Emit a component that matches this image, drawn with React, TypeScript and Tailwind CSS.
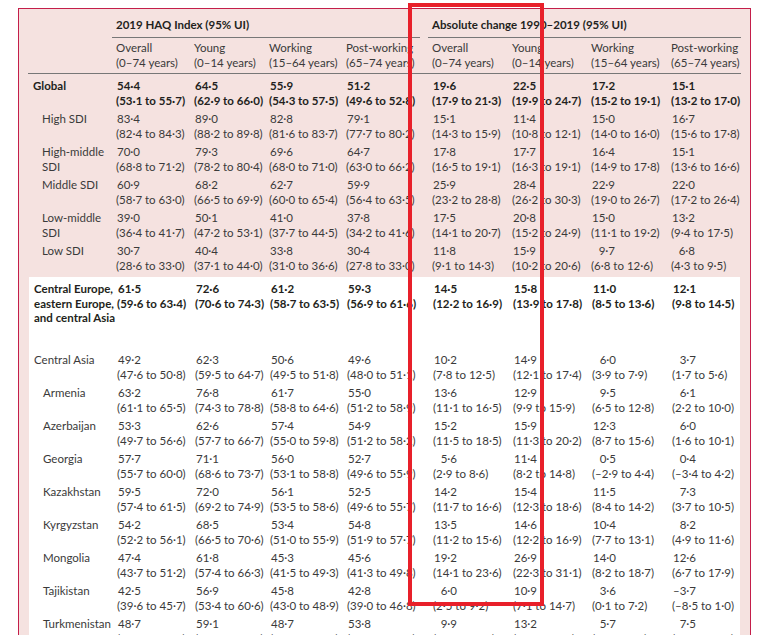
const cols = "grid grid-cols-[84px_78px_75px_77px_78px_8px_80px_79px_80px_74px]";

type Row = { label: string[]; v: string[][]; bold?: boolean; indent?: boolean; h?: string };

const F = "\u2007";

const pink: Row[] = [
  { label: ["Global"], bold: true, v: [["54·4", "(53·1 to 55·7)"], ["64·5", "(62·9 to 66·0)"], ["55·9", "(54·3 to 57·5)"], ["51·2", "(49·6 to 52·8)"], ["19·6", "(17·9 to 21·3)"], ["22·5", "(19·9 to 24·7)"], ["17·2", "(15·2 to 19·1)"], ["15·1", "(13·2 to 17·0)"]] },
  { label: ["High SDI"], indent: true, v: [["83·4", "(82·4 to 84·3)"], ["89·0", "(88·2 to 89·8)"], ["82·8", "(81·6 to 83·7)"], ["79·1", "(77·7 to 80·2)"], ["15·1", "(14·3 to 15·9)"], ["11·4", "(10·8 to 12·1)"], ["15·0", "(14·0 to 16·0)"], ["16·7", "(15·6 to 17·8)"]] },
  { label: ["High-middle", "SDI"], indent: true, v: [["70·0", "(68·8 to 71·2)"], ["79·3", "(78·2 to 80·4)"], ["69·6", "(68·0 to 71·0)"], ["64·7", "(63·0 to 66·2)"], ["17·8", "(16·5 to 19·1)"], ["17·7", "(16·3 to 19·1)"], ["16·4", "(14·9 to 17·8)"], ["15·1", "(13·6 to 16·6)"]] },
  { label: ["Middle SDI"], indent: true, v: [["60·9", "(58·7 to 63·0)"], ["68·2", "(66·5 to 69·9)"], ["62·7", "(60·0 to 65·4)"], ["59·9", "(56·4 to 63·5)"], ["25·9", "(23·2 to 28·8)"], ["28·4", "(26·2 to 30·3)"], ["22·9", "(19·0 to 26·7)"], ["22·0", "(17·2 to 26·4)"]] },
  { label: ["Low-middle", "SDI"], indent: true, v: [["39·0", "(36·4 to 41·7)"], ["50·1", "(47·2 to 53·1)"], ["41·0", "(37·7 to 44·5)"], ["37·8", "(34·2 to 41·6)"], ["17·5", "(14·1 to 20·7)"], ["20·8", "(15·2 to 24·9)"], ["15·0", "(11·1 to 19·2)"], ["13·2", "(9·4 to 17·5)"]] },
  { label: ["Low SDI"], indent: true, v: [["30·7", "(28·6 to 33·0)"], ["40·4", "(37·1 to 44·0)"], ["33·8", "(31·0 to 36·6)"], ["30·4", "(27·8 to 33·0)"], ["11·8", "(9·1 to 14·3)"], ["15·9", "(10·2 to 20·6)"], [F + "9·7", "(6·8 to 12·6)"], [F + "6·8", "(4·3 to 9·5)"]] },
];

const white: Row[] = [
  { label: ["Central Europe,", "eastern Europe,", "and central Asia"], bold: true, h: "h-[71px]", v: [["61·5", "(59·6 to 63·4)"], ["72·6", "(70·6 to 74·3)"], ["61·2", "(58·7 to 63·5)"], ["59·3", "(56·9 to 61·6)"], ["14·5", "(12·2 to 16·9)"], ["15·8", "(13·9 to 17·8)"], ["11·0", "(8·5 to 13·6)"], ["12·1", "(9·8 to 14·5)"]] },
  { label: ["Central Asia"], v: [["49·2", "(47·6 to 50·8)"], ["62·3", "(59·5 to 64·7)"], ["50·6", "(49·5 to 51·8)"], ["49·6", "(48·0 to 51·1)"], ["10·2", "(7·8 to 12·5)"], ["14·9", "(12·1 to 17·4)"], [F + "6·0", "(3·9 to 7·9)"], [F + "3·7", "(1·7 to 5·6)"]] },
  { label: ["Armenia"], indent: true, v: [["63·2", "(61·1 to 65·5)"], ["76·8", "(74·3 to 78·8)"], ["61·7", "(58·8 to 64·6)"], ["55·0", "(51·2 to 58·9)"], ["13·6", "(11·1 to 16·5)"], ["12·9", "(9·9 to 15·9)"], [F + "9·5", "(6·5 to 12·8)"], [F + "6·1", "(2·2 to 10·0)"]] },
  { label: ["Azerbaijan"], indent: true, v: [["53·3", "(49·7 to 56·6)"], ["62·6", "(57·7 to 66·7)"], ["57·4", "(55·0 to 59·8)"], ["54·9", "(51·2 to 58·2)"], ["15·2", "(11·5 to 18·5)"], ["15·9", "(11·3 to 20·2)"], ["12·3", "(8·7 to 15·6)"], [F + "6·0", "(1·6 to 10·1)"]] },
  { label: ["Georgia"], indent: true, v: [["57·7", "(55·7 to 60·0)"], ["71·1", "(68·6 to 73·7)"], ["56·0", "(53·1 to 58·8)"], ["52·7", "(49·6 to 55·9)"], [F + "5·6", "(2·9 to 8·6)"], ["11·4", "(8·2 to 14·8)"], [F + "0·5", "(–2·9 to 4·4)"], [F + "0·4", "(–3·4 to 4·2)"]] },
  { label: ["Kazakhstan"], indent: true, v: [["59·5", "(57·4 to 61·5)"], ["72·0", "(69·2 to 74·9)"], ["56·1", "(53·5 to 58·6)"], ["52·5", "(49·6 to 55·7)"], ["14·2", "(11·7 to 16·6)"], ["15·4", "(12·3 to 18·6)"], ["11·5", "(8·4 to 14·2)"], [F + "7·3", "(3·7 to 10·5)"]] },
  { label: ["Kyrgyzstan"], indent: true, v: [["54·2", "(52·2 to 56·1)"], ["68·5", "(66·5 to 70·6)"], ["53·4", "(51·0 to 55·9)"], ["54·8", "(51·9 to 57·7)"], ["13·5", "(11·2 to 15·6)"], ["14·6", "(12·2 to 16·9)"], ["10·4", "(7·7 to 13·1)"], [F + "8·2", "(4·9 to 11·6)"]] },
  { label: ["Mongolia"], indent: true, v: [["47·4", "(43·7 to 51·2)"], ["61·8", "(57·4 to 66·3)"], ["45·3", "(41·5 to 49·3)"], ["45·6", "(41·3 to 49·8)"], ["19·2", "(14·1 to 23·6)"], ["26·9", "(22·3 to 31·1)"], ["14·0", "(8·2 to 18·7)"], ["12·6", "(6·7 to 17·9)"]] },
  { label: ["Tajikistan"], indent: true, v: [["42·5", "(39·6 to 45·7)"], ["56·9", "(53·4 to 60·6)"], ["45·8", "(43·0 to 48·9)"], ["42·8", "(39·0 to 46·8)"], [F + "6·0", "(2·5 to 9·2)"], ["10·9", "(7·1 to 14·7)"], [F + "3·6", "(0·1 to 7·2)"], ["–3·7", "(–8·5 to 1·0)"]] },
  { label: ["Turkmenistan"], indent: true, v: [["48·7", "(45·7 to 51·5)"], ["59·1", "(55·7 to 62·7)"], ["48·7", "(45·2 to 52·1)"], ["53·8", "(49·8 to 57·5)"], [F + "9·9", "(6·3 to 13·2)"], ["13·2", "(9·8 to 16·5)"], [F + "5·7", "(1·6 to 9·6)"], [F + "7·5", "(2·9 to 12·0)"]] },
  { label: ["Uzbekistan"], indent: true, v: [["49·0", ""], ["64·9", ""], ["48·4", ""], ["47·6", ""], [F + "8·3", ""], ["11·5", ""], [F + "3·9", ""], [F + "0·1", ""]] },
];

function TRow({ r }: { r: Row }) {
  const cells = [...r.v.slice(0, 4), null, ...r.v.slice(4)];
  return (
    <div className={`${cols} ${r.h ?? "h-[33px]"} ${r.bold ? "font-bold text-[#231f20]" : ""}`}>
      <div className={`whitespace-nowrap ${r.indent ? "pl-[14px]" : "pl-[5px]"}`}>
        {r.label.map((l) => (
          <div key={l}>{l}</div>
        ))}
      </div>
      {cells.map((c, i) =>
        c ? (
          <div key={i} className="pl-[4px] whitespace-nowrap">
            <div className="pl-[1px]">{c[0]}</div>
            <div>{c[1]}</div>
          </div>
        ) : (
          <div key={i} />
        )
      )}
    </div>
  );
}

const subs = [
  ["Overall", "(0–74 years)"],
  ["Young", "(0–14 years)"],
  ["Working", "(15–64 years)"],
  ["Post-working", "(65–74 years)"],
];

export default function App() {
  return (
    <div className="relative w-[774px] h-[635px] overflow-hidden bg-white" style={{ fontFamily: "Lato, sans-serif" }}>
      <div className="ml-[18px] mt-[8px] w-[733px] h-[640px] border-l border-r border-t border-[#c41e4a] bg-[#f5e2e0] text-[11.5px] leading-[14.5px] text-[#3a3a3a]">
        <div className="px-[9px]">
          <div className={`${cols} h-[29px] items-center font-bold text-[#231f20]`}>
            <div />
            <div className="col-span-4 h-full flex items-center pl-[4px] pt-[5px] border-b border-[#777]">2019 HAQ Index (95% UI)</div>
            <div />
            <div className="col-span-4 h-full flex items-center pl-[4px] pt-[5px] border-b border-[#777]">Absolute change 1990–2019 (95% UI)</div>
          </div>
          <div className={`${cols} h-[36px] pt-[3px] border-b border-[#777]`}>
            <div />
            {subs.map((s) => (
              <div key={s[0]} className="pl-[4px] whitespace-nowrap">
                <div>{s[0]}</div>
                <div>{s[1]}</div>
              </div>
            ))}
            <div />
            {subs.map((s) => (
              <div key={"b" + s[0]} className="pl-[4px] whitespace-nowrap">
                <div>{s[0]}</div>
                <div>{s[1]}</div>
              </div>
            ))}
          </div>
          <div className="pt-[5px]">
            {pink.map((r) => (
              <TRow key={r.label.join()} r={r} />
            ))}
          </div>
        </div>
        <div className="mx-[10px] bg-white pt-[5px]">
          {white.map((r) => (
            <TRow key={r.label.join()} r={r} />
          ))}
        </div>
      </div>
      <div className="absolute left-[408px] top-[3px] w-[136px] h-[603px] border-[4px] border-[#e8202a]" />
    </div>
  );
}
